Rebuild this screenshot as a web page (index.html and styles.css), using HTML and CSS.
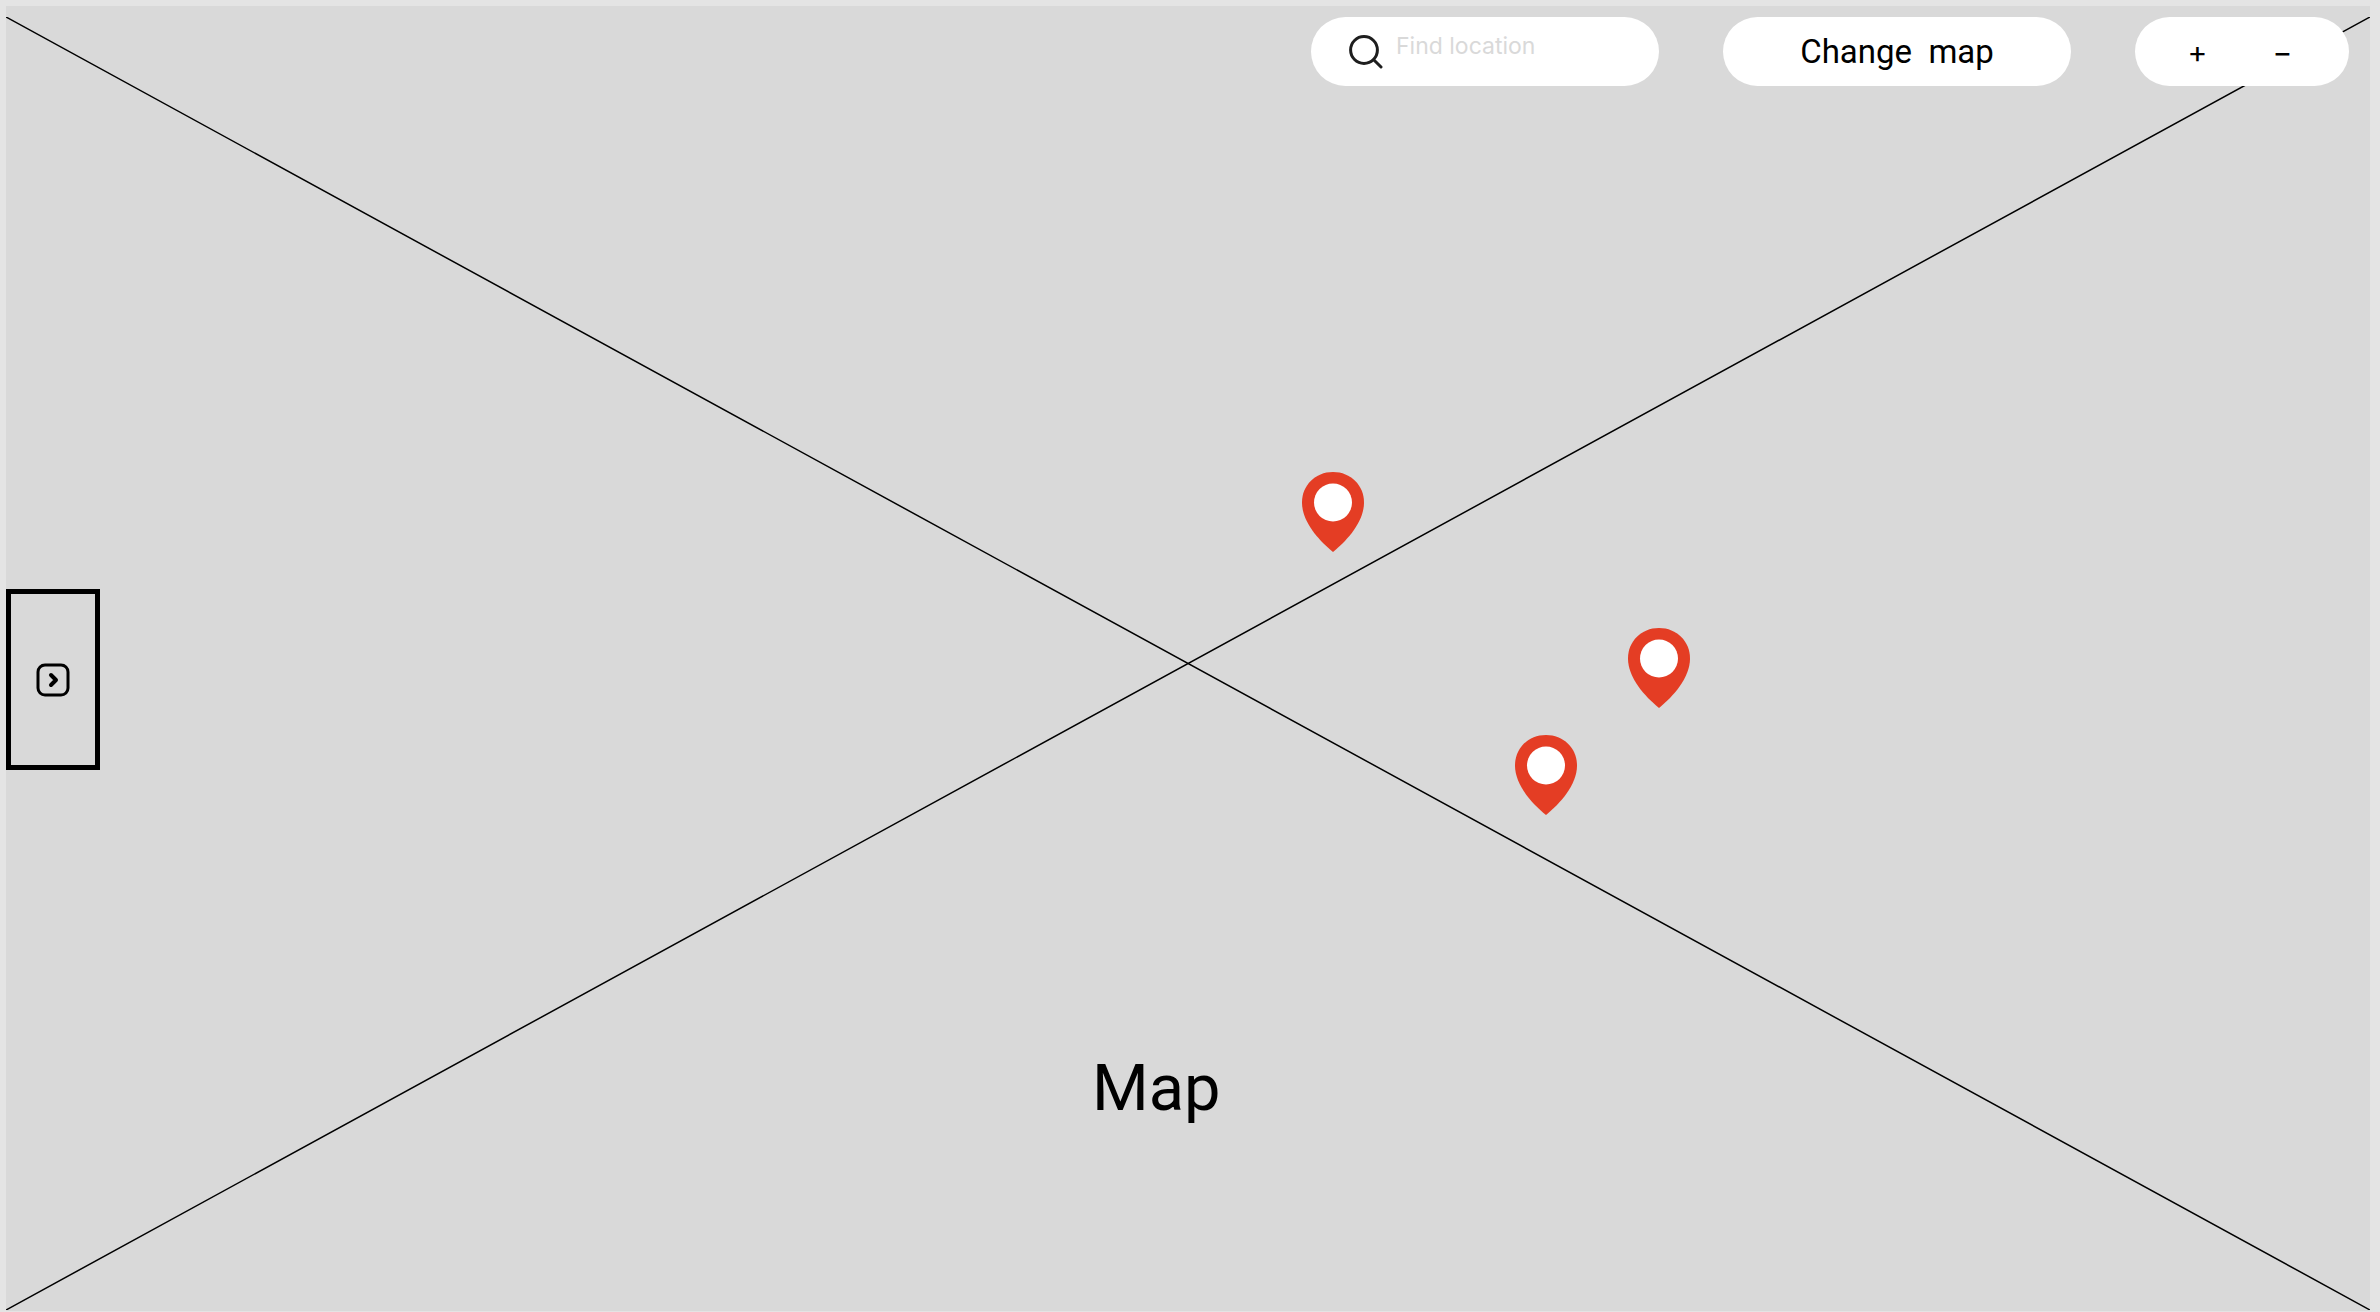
FILE: index.html
```html
<!DOCTYPE html>
<html lang="en">
<head>
  <meta charset="utf-8">
  <meta name="viewport" content="width=device-width, initial-scale=1">
  <title>Map</title>
  <link rel="stylesheet" href="styles.css">
</head>
<body>
  <main class="map">
    <svg class="map-cross" viewBox="0 0 100 100" preserveAspectRatio="none" aria-hidden="true">
      <path d="M0 0L100 100M0 100L100 0"/>
    </svg>

    <header class="toolbar">
      <label class="pill search">
        <svg class="search-icon" viewBox="0 0 34 34" role="img" aria-label="Search">
          <circle cx="15" cy="15" r="13.4"/>
          <path d="M24.7 24.7L32 32"/>
        </svg>
        <input class="search-input" type="text" placeholder="Find location">
      </label>
      <button class="pill change" type="button">Change  map</button>
      <div class="pill zoom">
        <button class="zoom-button" type="button" aria-label="Zoom in">+</button>
        <button class="zoom-button" type="button" aria-label="Zoom out">−</button>
      </div>
    </header>

    <button class="drawer" type="button" aria-label="Open panel">
      <svg class="drawer-icon" viewBox="0 0 34 34">
        <rect x="2" y="2" width="30" height="30" rx="7"/>
        <path class="drawer-chevron" d="M15 12L20 17L15 22"/>
      </svg>
    </button>

    <button class="pin pin-north" type="button" aria-label="Location 1">
      <svg class="pin-icon" viewBox="0 0 64 82"><path d="M32 1C14 1 1 14.500 1 31.500C1 51 18 69.500 32 81C46 69.500 63 51 63 31.500C63 14.500 50 1 32 1Z"/><circle cx="32" cy="31.500" r="19"/></svg>
    </button>
    <button class="pin pin-east" type="button" aria-label="Location 2">
      <svg class="pin-icon" viewBox="0 0 64 82"><path d="M32 1C14 1 1 14.500 1 31.500C1 51 18 69.500 32 81C46 69.500 63 51 63 31.500C63 14.500 50 1 32 1Z"/><circle cx="32" cy="31.500" r="19"/></svg>
    </button>
    <button class="pin pin-south" type="button" aria-label="Location 3">
      <svg class="pin-icon" viewBox="0 0 64 82"><path d="M32 1C14 1 1 14.500 1 31.500C1 51 18 69.500 32 81C46 69.500 63 51 63 31.500C63 14.500 50 1 32 1Z"/><circle cx="32" cy="31.500" r="19"/></svg>
    </button>

    <h1 class="map-label">Map</h1>
  </main>
</body>
</html>
```
FILE: styles.css
```css
* {
  box-sizing: border-box;
}

body {
  margin: 0;
  min-height: 100vh;
  padding: 6px 10px 1px 6px;
  display: flex;
  background: #e4e4e4;
  color: #000;
  font-family: Roboto, sans-serif;
}

button,
input {
  margin: 0;
  padding: 0;
  border: 0;
  background: none;
  color: inherit;
  font: inherit;
}

svg {
  display: block;
  fill: none;
  stroke-linecap: round;
  stroke-linejoin: round;
}

.map {
  position: relative;
  flex: 1;
  min-width: 0;
  background: #d9d9d9;
}

.map-cross {
  position: absolute;
  top: 11px;
  left: 0;
  width: 100%;
  height: calc(100% - 12px);
  stroke: #000;
  stroke-width: 1.5px;
}

.map-cross path {
  vector-effect: non-scaling-stroke;
}

/* Toolbar */

.toolbar {
  position: relative;
  display: flex;
  flex-wrap: wrap;
  justify-content: flex-end;
  gap: 16px 64px;
  padding: 11px 21px 0;
}

.pill {
  height: 69px;
  border-radius: 35px;
  background: #fff;
}

.search {
  width: 348px;
  display: flex;
  align-items: center;
  gap: 13px;
  padding: 0 32px 0 38px;
}

.search-icon {
  flex: none;
  width: 34px;
  height: 34px;
  stroke: #1e1e1e;
  stroke-width: 3px;
}

.search-input {
  flex: 1;
  min-width: 0;
  height: 100%;
  padding-bottom: 12px;
  font-family: Inter, sans-serif;
  font-size: 23px;
  outline: none;
}

.search-input::placeholder {
  color: #d9d9d9;
  opacity: 1;
}

.change {
  width: 348px;
  font-size: 33px;
  white-space: pre;
}

.zoom {
  width: 214px;
  display: flex;
  justify-content: center;
  gap: 45px;
  padding-right: 4px;
}

.zoom-button {
  width: 40px;
  font-family: Inter, sans-serif;
  font-size: 30px;
}

/* Items laid over the map */

.drawer {
  position: absolute;
  top: 583px;
  left: 0;
  width: 94px;
  height: 181px;
  display: grid;
  place-items: center;
  border: 5px solid #000;
}

.drawer-icon {
  width: 34px;
  height: 34px;
  stroke: #000;
  stroke-width: 3px;
}

.drawer-chevron {
  stroke-width: 4px;
}

.pin {
  position: absolute;
}

.pin-icon {
  width: 64px;
  height: 82px;
}

.pin-icon path {
  fill: #e43d24;
}

.pin-icon circle {
  fill: #fff;
}

.pin-north {
  top: 465px;
  left: 1295px;
}

.pin-east {
  top: 621px;
  left: 1621px;
}

.pin-south {
  top: 728px;
  left: 1508px;
}

.map-label {
  position: absolute;
  top: 1042px;
  left: 1086px;
  margin: 0;
  font-size: 65px;
  font-weight: 400;
  line-height: 80px;
}
```
